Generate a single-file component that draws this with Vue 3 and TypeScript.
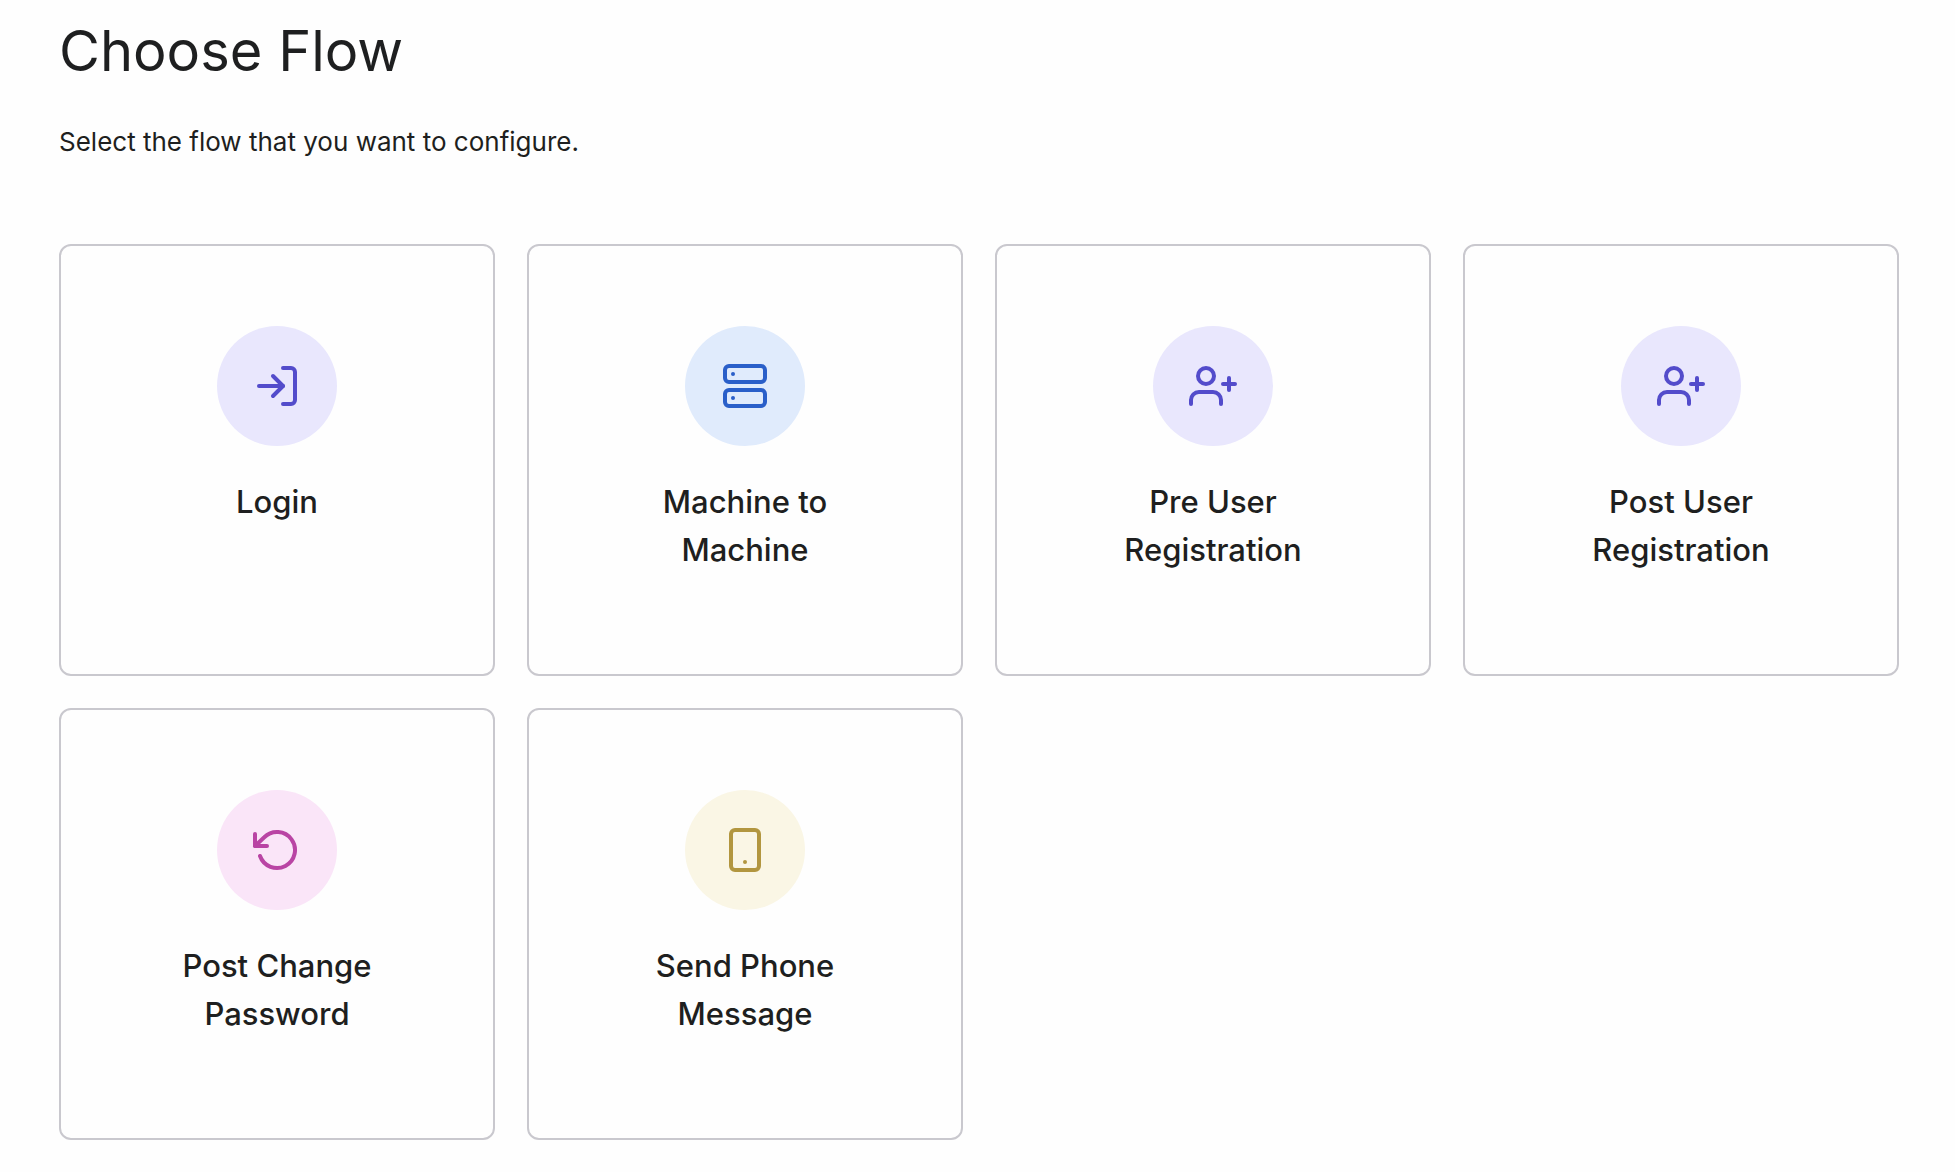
<script setup lang="ts">
type IconName = 'login' | 'server' | 'userPlus' | 'rotate' | 'phone'
type Tone = 'purple' | 'blue' | 'pink' | 'yellow'

interface Flow {
  id: string
  label: string
  icon: IconName
  tone: Tone
}

const flows: Flow[] = [
  { id: 'login', label: 'Login', icon: 'login', tone: 'purple' },
  { id: 'machine-to-machine', label: 'Machine to Machine', icon: 'server', tone: 'blue' },
  { id: 'pre-user-registration', label: 'Pre User Registration', icon: 'userPlus', tone: 'purple' },
  { id: 'post-user-registration', label: 'Post User Registration', icon: 'userPlus', tone: 'purple' },
  { id: 'post-change-password', label: 'Post Change Password', icon: 'rotate', tone: 'pink' },
  { id: 'send-phone-message', label: 'Send Phone Message', icon: 'phone', tone: 'yellow' },
]

const iconPaths: Record<IconName, string[]> = {
  login: ['M6 24H30', 'M20 14L30 24L20 34', 'M30 6H38a4 4 0 0 1 4 4V38a4 4 0 0 1-4 4H30'],
  server: [
    'M8 4H40a4 4 0 0 1 4 4V16a4 4 0 0 1-4 4H8a4 4 0 0 1-4-4V8a4 4 0 0 1 4-4z',
    'M8 28H40a4 4 0 0 1 4 4V40a4 4 0 0 1-4 4H8a4 4 0 0 1-4-4V32a4 4 0 0 1 4-4z',
    'M12 12h.02',
    'M12 36h.02',
  ],
  userPlus: [
    'M17 6a8 8 0 1 1 0 16a8 8 0 1 1 0-16z',
    'M2 42V38a8 8 0 0 1 8-8H24a8 8 0 0 1 8 8V42',
    'M40 16V28',
    'M34 22H46',
  ],
  rotate: ['M2 8V20H14', 'M7.02 30A18 18 0 1 0 11.28 11.28L2 20'],
  phone: [
    'M14 4H34a4 4 0 0 1 4 4V40a4 4 0 0 1-4 4H14a4 4 0 0 1-4-4V8a4 4 0 0 1 4-4z',
    'M24 36h.02',
  ],
}
</script>

<template>
  <main class="page">
    <h1 class="title">Choose Flow</h1>
    <p class="intro">Select the flow that you want to configure.</p>
    <div class="flows">
      <button v-for="flow in flows" :key="flow.id" type="button" class="card">
        <span class="badge" :class="flow.tone">
          <svg class="icon" viewBox="0 0 48 48" aria-hidden="true">
            <path v-for="d in iconPaths[flow.icon]" :key="d" :d="d" />
          </svg>
        </span>
        <span class="label">{{ flow.label }}</span>
      </button>
    </div>
  </main>
</template>

<style>
body {
  margin: 0;
  background: #fefefe;
}
</style>

<style scoped>
.page {
  padding: 16px 56px 32px 59px;
  color: #1e1f20;
  font-family: Inter, "Liberation Sans", sans-serif;
}

.title {
  margin: 0;
  font-size: 56px;
  font-weight: 400;
  line-height: 70px;
}

.intro {
  margin: 34px 0 80px;
  font-size: 26px;
  line-height: 44px;
}

.flows {
  display: grid;
  grid-template-columns: repeat(4, minmax(0, 1fr));
  gap: 32px;
}

.card {
  display: flex;
  flex-direction: column;
  align-items: center;
  gap: 32px;
  min-height: 432px;
  padding: 80px;
  border: 2px solid #c9c8ce;
  border-radius: 12px;
  background: #fefefe;
  color: inherit;
  font: inherit;
  cursor: pointer;
}

.badge {
  display: flex;
  align-items: center;
  justify-content: center;
  width: 120px;
  height: 120px;
  border-radius: 50%;
}

.icon {
  width: 48px;
  height: 48px;
  overflow: visible;
  fill: none;
  stroke: currentColor;
  stroke-width: 4;
  stroke-linecap: round;
  stroke-linejoin: round;
}

.purple {
  background: #e9e7fd;
  color: #534ccb;
}

.blue {
  background: #e0ebfc;
  color: #2a5fc9;
}

.pink {
  background: #fae5f8;
  color: #b944a4;
}

.yellow {
  background: #faf6e5;
  color: #b2963f;
}

.label {
  max-width: 208px;
  font-size: 31px;
  font-weight: 500;
  line-height: 48px;
  text-align: center;
}
</style>
